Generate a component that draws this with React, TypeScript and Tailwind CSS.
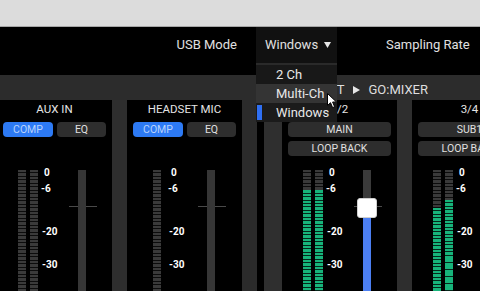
import React from "react";

const OFF =
  "bg-[repeating-linear-gradient(to_bottom,#3a3a3a_0px,#3a3a3a_2.5px,#0c0c0c_2.5px,#0c0c0c_3.5px)]";
const ON =
  "bg-[repeating-linear-gradient(to_bottom,#17b47b_0px,#17b47b_2.5px,#06281b_2.5px,#06281b_3.5px)]";

function MeterCol({ off, full }: { off?: number; full?: boolean }) {
  if (full) {
    return <div className={`h-full w-[8px] shrink-0 ${OFF}`} />;
  }
  return (
    <div className="flex h-full w-[8px] shrink-0 flex-col">
      <div className={`shrink-0 ${OFF}`} style={{ height: off }} />
      <div className={`flex-1 ${ON}`} />
    </div>
  );
}

function Scale() {
  return (
    <div className="flex w-[16px] shrink-0 flex-col text-[10px] font-bold leading-[10px] text-white">
      <div className="ml-[3px] mt-[-2px] h-[10px]">0</div>
      <div className="mt-[5.5px] h-[10px]">-6</div>
      <div className="ml-[1px] mt-[33px] h-[10px]">-20</div>
      <div className="ml-[1px] mt-[23.5px] h-[10px]">-30</div>
    </div>
  );
}

function Fader({ active }: { active?: boolean }) {
  return (
    <div className="relative h-full w-[28px] shrink-0">
      <div className="absolute left-0 top-[36px] h-px w-full bg-[#4a4a4a]" />
      {active ? (
        <div className="absolute left-[9px] top-0 flex h-full w-[8px] flex-col">
          <div className="h-[48px] bg-[#3a3a3a]" />
          <div className="flex-1 bg-[#4c7ff2]" />
        </div>
      ) : (
        <div className="absolute left-[9px] top-0 h-full w-[8px] bg-[#363636]" />
      )}
      {active && (
        <div className="absolute left-[3px] top-[28px] h-[20px] w-[20px] rounded-[3px] border border-[#cfcfcf] bg-white" />
      )}
    </div>
  );
}

type StripProps = {
  title: string;
  kind: "comp" | "out";
  outLabel?: string;
  meters: "stereoOff" | "monoOff" | "a" | "b";
  active?: boolean;
};

function Strip({ title, kind, outLabel, meters, active }: StripProps) {
  return (
    <div className="flex h-full w-[115px] shrink-0 flex-col bg-black">
      <div className="h-[70px] shrink-0">
        <div className="flex h-[20px] items-center justify-center text-[11.5px] text-[#e4e4e4]">
          {title}
        </div>
        {kind === "comp" ? (
          <div className="mt-[2px] flex gap-[4px] px-[6px] text-[10.5px]">
            <div className="flex h-[15px] w-[50px] items-center justify-center rounded-[4px] bg-[#2d7af4] text-[#b9d2fb]">
              COMP
            </div>
            <div className="flex h-[15px] flex-1 items-center justify-center rounded-[4px] bg-[#2e2e2e] text-[#e0e0e0]">
              EQ
            </div>
          </div>
        ) : (
          <div className="mt-[2px] flex flex-col gap-[4px] px-[6px] text-[10.5px] text-[#e0e0e0]">
            <div className="flex h-[15px] items-center justify-center rounded-[4px] bg-[#2d2d2d]">
              {outLabel}
            </div>
            <div className="flex h-[15px] items-center justify-center rounded-[4px] bg-[#2d2d2d]">
              LOOP BACK
            </div>
          </div>
        )}
      </div>
      <div className="flex flex-1 items-start">
        {meters === "monoOff" ? (
          <>
            <div className="ml-[26px] h-full">
              <MeterCol full />
            </div>
            <div className="ml-[7px] h-full">
              <Scale />
            </div>
            <div className="ml-[14px] h-full">
              <Fader />
            </div>
          </>
        ) : (
          <>
            <div className="ml-[21px] flex h-full gap-[4px]">
              {meters === "stereoOff" && (
                <>
                  <MeterCol full />
                  <MeterCol full />
                </>
              )}
              {meters === "a" && (
                <>
                  <MeterCol off={20} />
                  <MeterCol off={20} />
                </>
              )}
              {meters === "b" && (
                <>
                  <MeterCol off={38} />
                  <MeterCol off={30} />
                </>
              )}
            </div>
            <div className="ml-[3px] h-full">
              <Scale />
            </div>
            <div className="ml-[12px] h-full">
              <Fader active={active} />
            </div>
          </>
        )}
      </div>
    </div>
  );
}

export default function App() {
  return (
    <div className="relative h-[291px] w-[480px] overflow-hidden bg-black font-['Roboto','Noto_Sans',sans-serif]">
      {/* top window band */}
      <div className="h-[27px] border-b border-[#a6a6a6] bg-[#dcdcdc]" />

      {/* header */}
      <div className="relative z-10 flex h-[48px] items-start bg-black text-[13px] text-[#e0e0e0]">
        <div className="flex h-[36px] w-[256px] shrink-0 items-center justify-end pr-[19px]">
          USB Mode
        </div>
        <div className="relative w-[81px] shrink-0">
          <div className="flex h-[36px] items-center bg-[#111111] pl-[9px]">
            <span>Windows</span>
            <svg width="7" height="6" viewBox="0 0 7 6" className="ml-[6px]">
              <path d="M0 0 H7 L3.5 6 Z" fill="#e6e6e6" />
            </svg>
          </div>
          <div className="absolute left-0 top-[36px] w-full border-t-2 border-[#2a2a2a] text-[13px] text-[#e8e8e8]">
            <div className="flex h-[19px] items-center bg-[#181818]">
              <div className="ml-[1px] h-[15px] w-[5px]" />
              <span className="ml-[14px]">2 Ch</span>
            </div>
            <div className="flex h-[19px] items-center bg-[#343434]">
              <div className="ml-[1px] h-[15px] w-[5px]" />
              <span className="ml-[14px]">Multi-Ch</span>
            </div>
            <div className="flex h-[19px] items-center bg-[#1b1b1b]">
              <div className="ml-[1px] h-[15px] w-[5px] bg-[#2f6ff2]" />
              <span className="ml-[14px]">Windows</span>
            </div>
          </div>
        </div>
        <div className="ml-[49px] flex h-[36px] shrink-0 items-center">Sampling Rate</div>
      </div>

      {/* breadcrumb bar */}
      <div className="flex h-[25px] items-center justify-end bg-[#2c2c2c] pr-[52px] pt-[4px] text-[13px] text-[#dedede]">
        <span>OUTPUT</span>
        <svg width="7" height="8" viewBox="0 0 7 8" className="ml-[8px]">
          <path d="M0 0 L7 4 L0 8 Z" fill="#e6e6e6" />
        </svg>
        <span className="ml-[9px]">GO:MIXER</span>
      </div>

      {/* channel strips */}
      <div className="ml-[-3px] flex h-[191px] bg-[#2c2c2c]">
        <Strip title="AUX IN" kind="comp" meters="stereoOff" />
        <div className="w-[15px] shrink-0 bg-[#2e2e2e]" />
        <Strip title="HEADSET MIC" kind="comp" meters="monoOff" />
        <div className="w-[15px] shrink-0 bg-[#2b2b2b]" />
        <div className="w-[7px] shrink-0 bg-black" />
        <div className="w-[18px] shrink-0 bg-[#2f2f2f]" />
        <Strip title="1/2" kind="out" outLabel="MAIN" meters="a" active />
        <div className="w-[15px] shrink-0 bg-[#2e2e2e]" />
        <Strip title="3/4" kind="out" outLabel="SUB1" meters="b" />
      </div>

      {/* mouse cursor */}
      <svg
        width="11"
        height="16"
        viewBox="0 0 11 16"
        className="absolute left-[327px] top-[93px] z-20"
      >
        <path
          d="M0.5 0.5 L0.5 12.5 L3.5 9.7 L5.6 14.6 L7.6 13.7 L5.6 9 L9.5 9 Z"
          fill="#ffffff"
          stroke="#000000"
          strokeWidth="1"
          strokeLinejoin="round"
        />
      </svg>
    </div>
  );
}
